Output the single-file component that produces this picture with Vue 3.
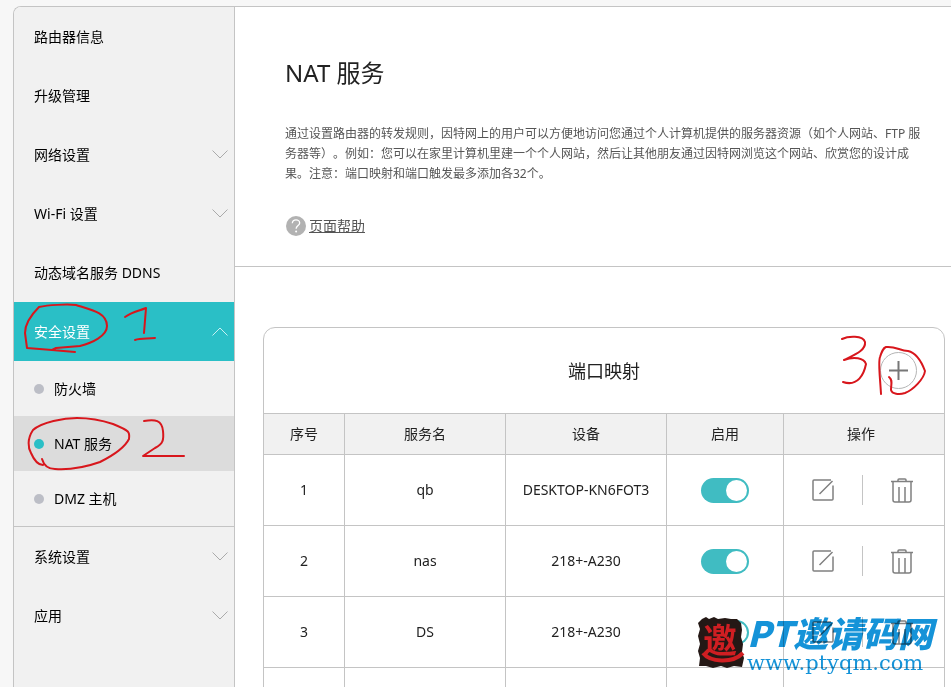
<template>
  <div class="page">
    <div class="frame">
      <!-- SIDEBAR -->
      <nav class="sidebar">
        <ul class="menu">
          <li v-for="item in menu" :key="item.name">
            <a href="#" class="menu-item" :class="{ open: item.open }" @click.prevent="item.open = item.children ? !item.open : false">
              <span>{{ item.name }}</span>
              <svg v-if="item.arrow" class="arrow" viewBox="0 0 16 9"><path d="M.5 .5 8 8 15.5 .5"/></svg>
            </a>
            <ul v-if="item.children && item.open" class="submenu">
              <li v-for="sub in item.children" :key="sub">
                <a href="#" class="sub-item" :class="{ active: sub === current }" @click.prevent="current = sub">
                  <i class="dot"></i>{{ sub }}
                </a>
              </li>
            </ul>
          </li>
        </ul>
      </nav>

      <!-- CONTENT -->
      <main class="main">
        <section class="intro">
          <h1>NAT 服务</h1>
          <p>通过设置路由器的转发规则，因特网上的用户可以方便地访问您通过个人计算机提供的服务器资源（如个人网站、FTP 服务器等）。例如：您可以在家里计算机里建一个个人网站，然后让其他朋友通过因特网浏览这个网站、欣赏您的设计成果。注意：端口映射和端口触发最多添加各32个。</p>
          <a href="#" class="help">
            <svg viewBox="0 0 20 20">
              <circle cx="10" cy="10" r="10" fill="#b2b2b2"/>
              <path d="M6.3 7.2C6.5 4.9 8 3.8 10 3.8s3.7 1.2 3.7 3.1c0 2.6-3.6 2.7-3.6 5.9" fill="none" stroke="#fff" stroke-width="1.3"/>
              <circle cx="10.1" cy="15.6" r="1" fill="#fff"/>
            </svg>
            <span>页面帮助</span>
          </a>
        </section>

        <section class="card">
          <header class="card-head">
            <h2>端口映射</h2>
            <button class="add" aria-label="添加">
              <svg viewBox="0 0 19 19"><path d="M9.5 0v19M0 9.5h19"/></svg>
            </button>
          </header>
          <table>
            <colgroup>
              <col class="c-no"><col class="c-name"><col class="c-name"><col class="c-on"><col class="c-act">
            </colgroup>
            <thead>
              <tr><th>序号</th><th>服务名</th><th>设备</th><th>启用</th><th>操作</th></tr>
            </thead>
            <tbody>
              <tr v-for="(row, idx) in rows" :key="idx">
                <td>{{ idx + 1 }}</td>
                <td>{{ row.name }}</td>
                <td>{{ row.device }}</td>
                <td><input v-model="row.enabled" class="switch" type="checkbox" :aria-label="'启用 ' + row.name"></td>
                <td>
                  <div class="actions">
                    <button aria-label="编辑">
                      <svg viewBox="0 0 24 26">
                        <path d="M20 3H3a1 1 0 0 0-1 1v18a1 1 0 0 0 1 1h18a1 1 0 0 0 1-1V8.500M8.500 17 21.500 4"/>
                      </svg>
                    </button>
                    <i class="split"></i>
                    <button aria-label="删除" @click="rows.splice(idx, 1)">
                      <svg viewBox="0 0 24 26">
                        <path d="M1 4.500h22M8 4.500V3a1 1 0 0 1 1-1h6a1 1 0 0 1 1 1v1.500M3 4.500V23a2 2 0 0 0 2 2h14a2 2 0 0 0 2-2V4.500M9 10v15M15 10v15"/>
                      </svg>
                    </button>
                  </div>
                </td>
              </tr>
              <tr><td></td><td></td><td></td><td></td><td></td></tr>
            </tbody>
          </table>
        </section>
      </main>
    </div>

    <!-- pen marks over the page -->
    <svg class="marks" width="951" height="687" viewBox="0 0 951 687" aria-hidden="true">
      <path d="M80 346C92 343 107 336 107 326 107 313 92 310 76 305 67 304 48 305 39 307 29 317 25 325 25 333L27 348 52 350 75 352M80 346 56 348 52 350"/>
      <path d="M125 317C132 312 139 311 146 308L144 333M135 340C141 338 148 339 155 338"/>
      <path d="M42 459C44 466 48 469 55 469 70 470 86 467 100 462 110 457 124 449 129 439 130 432 130 431 113 424 101 420 90 418 77 418 64 418 42 422 33 430 27 439 28 448 31 453 34 460 38 465 43 465"/>
      <path d="M144 421C155 419 162 420 163 431 164 440 163 444 155 448L143 456 184 456"/>
      <path d="M842 339C848 336 863 335 865 342 866 350 856 354 844 360 854 356 864 358 866 364 864 374 858 387 843 382"/>
      <path d="M881 394C880 376 878 362 880 357 882 351 883 348 886 347 896 346 900 351 908 351 917 353 922 363 925 371 924 379 913 390 905 393 899 395 892 394 891 390 891 384 893 380 889 377"/>
    </svg>

    <div class="stamp">
      <svg class="seal" viewBox="0 0 47 51">
        <path d="M4 2 8 0 11 2 16 0 20 2 27 1 33 2 39 2 43 6 44 13 43 20 45 27 44 35 46 41 44 50 36 49 29 51 23 49 15 51 8 49 1 49 2 41 0 34 2 27 0 19 2 12 0 6Z" fill="#241815"/>
        <text x="5" y="36">邀</text>
        <path d="M5 36C12 45 34 47 45 36" fill="none" stroke="#cf1e22" stroke-width="4"/>
      </svg>
      <div class="stamp-text">
        <strong>PT邀请码网</strong>
        <span>www.ptyqm.com</span>
      </div>
    </div>
  </div>
</template>

<script setup>
import { reactive, ref } from 'vue'

const current = ref('NAT 服务')
const menu = reactive([
  { name: '路由器信息' },
  { name: '升级管理' },
  { name: '网络设置', arrow: true },
  { name: 'Wi-Fi 设置', arrow: true },
  { name: '动态域名服务 DDNS' },
  { name: '安全设置', arrow: true, open: true, children: ['防火墙', 'NAT 服务', 'DMZ 主机'] },
  { name: '系统设置', arrow: true },
  { name: '应用', arrow: true }
])
const rows = ref([
  { name: 'qb', device: 'DESKTOP-KN6FOT3', enabled: true },
  { name: 'nas', device: '218+-A230', enabled: true },
  { name: 'DS', device: '218+-A230', enabled: true }
])
</script>

<style>
body { margin: 0; background: #f7f7f7; }
</style>

<style scoped>
.page {
  position: relative;
  box-sizing: border-box;
  height: 100vh;
  padding: 6px 0 0 13px;
  overflow: hidden;
  background: #f7f7f7;
  color: #222;
  font: 14px/20px "Noto Sans", "Noto Sans CJK SC", sans-serif;
  text-spacing-trim: space-all;
}
ul { list-style: none; margin: 0; padding: 0; }
a { color: inherit; text-decoration: none; }
button { padding: 0; border: 0; background: none; cursor: pointer; }
svg { display: block; }

.frame {
  display: flex;
  min-height: 100%;
  border: 1px solid #c4c4c4;
  border-right: 0;
  border-radius: 8px 0 0 0;
  background: #fff;
  overflow: hidden;
}

/* sidebar */
.sidebar { flex: 0 0 220px; border-right: 1px solid #c4c4c4; background: #f1f1f1; color: #000; }
.menu-item { display: flex; align-items: center; justify-content: space-between; height: 59px; padding: 0 6px 0 20px; }
.menu-item.open { background: #2abfc6; color: #fff; }
.arrow { width: 16px; height: 9px; fill: none; stroke: #aaa; }
.open .arrow { transform: rotate(180deg); stroke: #c8f0f2; }
.submenu { border-bottom: 1px solid #c4c4c4; }
.sub-item { display: flex; align-items: center; gap: 10px; height: 55px; padding-left: 20px; }
.sub-item.active { background: #dcdcdc; }
.dot { width: 10px; height: 10px; border-radius: 50%; background: #bcbec6; }
.active .dot { background: #2abfc6; }

/* intro */
.main { flex: 1; min-width: 0; }
.intro { padding: 50px 24px 30px 50px; border-bottom: 1px solid #c4c4c4; }
h1 { margin: 0; font-size: 24px; line-height: 32px; font-weight: 400; }
.intro p { margin: 35px 0 32px; font-size: 12px; line-height: 20px; color: #555; }
.help { display: inline-flex; align-items: center; gap: 3px; color: #555; vertical-align: top; }
.help svg { width: 20px; height: 20px; margin-left: 1px; }
.help span { text-decoration: underline; }

/* port mapping */
.card { margin: 60px 6px 0 28px; border: 1px solid #c4c4c4; border-radius: 12px 12px 0 0; }
.card-head { display: grid; grid-template-columns: 1fr auto 1fr; align-items: center; height: 85px; padding: 0 27px; }
h2 { grid-column: 2; margin: 0; font-size: 18px; line-height: 24px; font-weight: 400; }
.add {
  display: grid;
  place-items: center;
  justify-self: end;
  width: 37px;
  height: 37px;
  border: 1px solid #b5b5b5;
  border-radius: 50%;
}
.add svg { width: 19px; height: 19px; stroke: #777; stroke-width: 2; }
table { width: 100%; table-layout: fixed; border-collapse: separate; border-spacing: 0; }
.c-no { width: 81px; }
.c-name { width: 161px; }
.c-on { width: 117px; }
.c-act { width: 160px; }
th, td { box-sizing: border-box; padding: 0; border-right: 1px solid #c4c4c4; border-bottom: 1px solid #c4c4c4; text-align: center; font-weight: 400; }
th:last-child, td:last-child { border-right: 0; }
th:last-child { padding-right: 6px; }
td:last-child { padding-right: 3px; }
th { height: 42px; border-top: 1px solid #c4c4c4; background: #f1f1f1; }
td { height: 71px; }

.switch {
  appearance: none;
  display: block;
  box-sizing: border-box;
  width: 48px;
  height: 25px;
  margin: 0 auto;
  padding: 2px;
  border-radius: 13px;
  background: #c4c4c4;
  cursor: pointer;
}
.switch::before { content: ""; display: block; width: 21px; height: 21px; border-radius: 50%; background: #fff; }
.switch:checked { background: #40bcc2; }
.switch:checked::before { margin-left: auto; }

.actions { display: flex; align-items: center; justify-content: center; gap: 27px; }
.actions svg { width: 24px; height: 26px; fill: none; stroke: #808080; stroke-width: 1.5; }
.split { width: 1px; height: 30px; background: #c4c4c4; }

/* overlays */
.marks { position: absolute; left: 0; top: 0; fill: none; stroke: #d8161c; stroke-width: 2; stroke-linecap: round; stroke-linejoin: round; pointer-events: none; }
.stamp { position: absolute; right: 18px; bottom: 13px; display: flex; align-items: flex-end; gap: 2px; pointer-events: none; }
.seal { width: 47px; height: 51px; margin-bottom: 6px; overflow: visible; }
.seal text { fill: #cf1e22; font: 700 34px "Noto Sans CJK SC", sans-serif; }
.stamp-text { display: flex; flex-direction: column; color: #1593d8; mix-blend-mode: multiply; }
.stamp-text strong { font: italic 900 35px/40px "Noto Sans CJK SC", sans-serif; }
.stamp-text span { font: 21px/22px "DejaVu Serif", serif; }
</style>
